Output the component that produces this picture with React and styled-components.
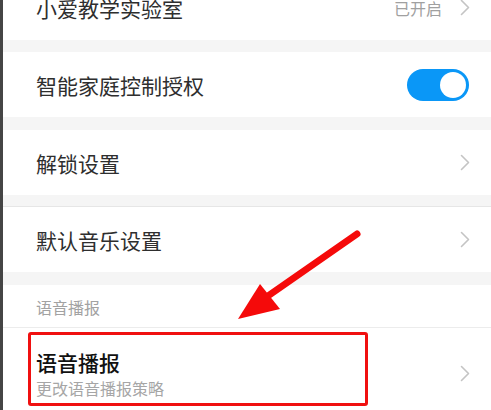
import React from "react";
import styled, { createGlobalStyle } from "styled-components";

const Global = createGlobalStyle`
  html, body { margin: 0; padding: 0; background: #fff; overflow: hidden; }
  body { font-family: "Noto Sans CJK SC", "Noto Sans", sans-serif; }
`;

const Viewport = styled.div`
  position: relative;
  width: 491px;
  height: 410px;
  overflow: hidden;
  border-left: 3px solid #454545;
  box-sizing: border-box;
  background: #fff;
`;

const List = styled.div`
  display: flex;
  flex-direction: column;
  margin-top: -25px;
`;

const Row = styled.div`
  display: flex;
  align-items: center;
  justify-content: space-between;
  height: ${(p) => p.$h || 65}px;
  padding: 0 21px 0 33px;
  background: #fff;
  box-sizing: border-box;
  border-top: ${(p) => (p.$divider ? "1px solid #ececec" : "none")};
`;

const Gap = styled.div`
  height: ${(p) => p.$h || 12}px;
  background: #f5f5f5;
  border-bottom: ${(p) => (p.$line ? "1px solid #e6e6e6" : "none")};
  box-sizing: border-box;
`;

const Title = styled.div`
  font-size: 21px;
  line-height: 26px;
  color: ${(p) => (p.$strong ? "#111" : "#2e2e2e")};
  font-weight: ${(p) => (p.$strong ? 500 : 400)};
`;

const Sub = styled.div`
  font-size: 16px;
  line-height: 20px;
  color: #a6a6a6;
  margin-top: 3px;
`;

const TextCol = styled.div`
  display: flex;
  flex-direction: column;
`;

const Header = styled.div`
  height: 42px;
  display: flex;
  align-items: center;
  padding: 2px 0 0 33px;
  box-sizing: border-box;
  font-size: 16px;
  color: #a2a2a2;
  background: #fff;
`;

const Right = styled.div`
  display: flex;
  align-items: center;
  gap: 18px;
`;

const Value = styled.span`
  font-size: 16px;
  color: #a0a0a0;
`;

const Toggle = styled.div`
  width: 62px;
  height: 32px;
  border-radius: 16px;
  background: #0a97f7;
  display: flex;
  align-items: center;
  justify-content: flex-end;
  padding: 0 3px;
  box-sizing: border-box;
  margin-right: 1px;
`;

const Knob = styled.div`
  width: 26px;
  height: 26px;
  border-radius: 50%;
  background: #fff;
`;

const Chevron = () => (
  <svg width="10" height="17" viewBox="0 0 10 17" style={{ display: "block" }}>
    <path d="M1.5 1.5 L8.5 8.5 L1.5 15.5" fill="none" stroke="#c4c4c4" strokeWidth="1.6" strokeLinecap="round" strokeLinejoin="round" />
  </svg>
);

const Highlight = styled.div`
  position: absolute;
  left: 25px;
  top: 332px;
  width: 340px;
  height: 74px;
  border: 3.5px solid #f01010;
  border-radius: 3px;
  box-sizing: border-box;
  pointer-events: none;
`;

const ArrowSvg = styled.svg`
  position: absolute;
  left: 0;
  top: 0;
  pointer-events: none;
`;

export default function App() {
  return (
    <>
      <Global />
      <Viewport>
        <List>
          <Row>
            <Title>小爱教学实验室</Title>
            <Right>
              <Value>已开启</Value>
              <Chevron />
            </Right>
          </Row>
          <Gap $h={12} />
          <Row>
            <Title>智能家庭控制授权</Title>
            <Toggle>
              <Knob />
            </Toggle>
          </Row>
          <Gap $h={13} />
          <Row>
            <Title>解锁设置</Title>
            <Chevron />
          </Row>
          <Gap $h={12} $line />
          <Row>
            <Title>默认音乐设置</Title>
            <Chevron />
          </Row>
          <Gap $h={13} />
          <Header>语音播报</Header>
          <Row $h={92} $divider>
            <TextCol>
              <Title $strong>语音播报</Title>
              <Sub>更改语音播报策略</Sub>
            </TextCol>
            <Chevron />
          </Row>
        </List>
        <Highlight />
        <ArrowSvg width="491" height="410" viewBox="0 0 491 410">
          <line x1="354" y1="234" x2="262" y2="298" stroke="#f50a0a" strokeWidth="7" strokeLinecap="round" />
          <polygon points="235,319 257,284 277,309" fill="#f50a0a" />
        </ArrowSvg>
      </Viewport>
    </>
  );
}
